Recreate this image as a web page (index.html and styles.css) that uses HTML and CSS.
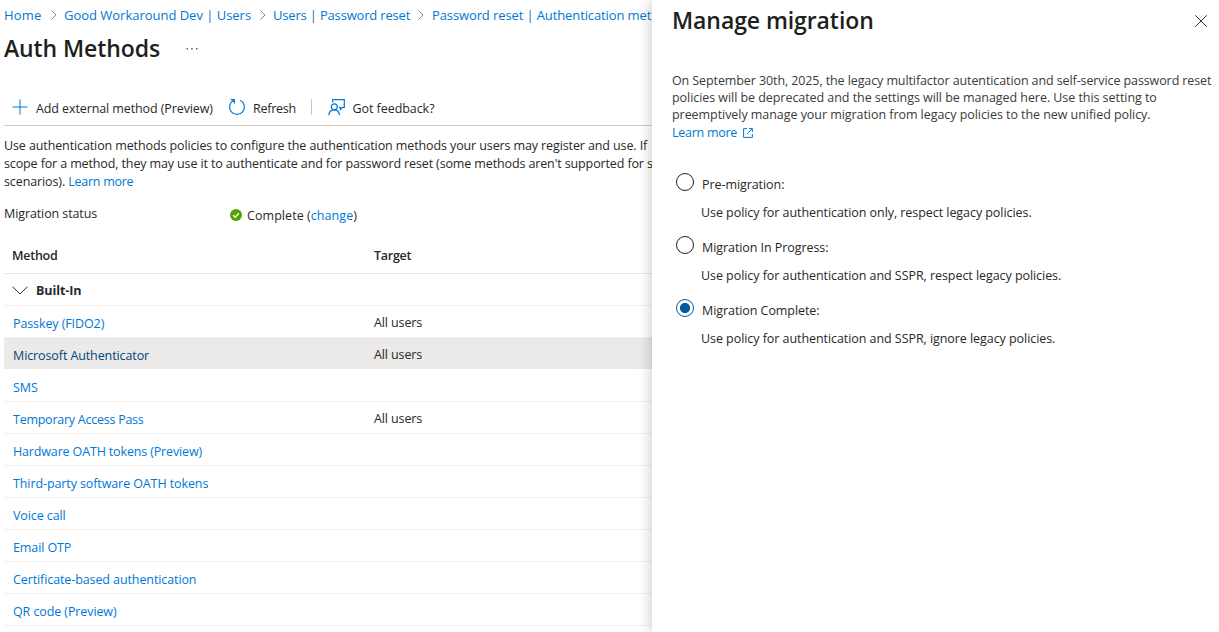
FILE: index.html
```
<!DOCTYPE html>
<html lang="en">
<head>
<meta charset="utf-8">
<title>Auth Methods</title>
<link rel="stylesheet" href="styles.css">
</head>
<body>
<div class="app">
  <main class="blade">
    <nav class="crumbs">
      <a class="c-home">Home</a>
      <svg class="sep" viewBox="0 0 8 12"><path d="M1.5 1.5 6 6 1.5 10.500"/></svg>
      <a class="c-dev">Good Workaround Dev | Users</a>
      <svg class="sep" viewBox="0 0 8 12"><path d="M1.5 1.5 6 6 1.5 10.500"/></svg>
      <a class="c-reset">Users | Password reset</a>
      <svg class="sep" viewBox="0 0 8 12"><path d="M1.5 1.5 6 6 1.5 10.500"/></svg>
      <a class="c-auth">Password reset | Authentication met</a>
    </nav>
    <header class="head">
      <h1 class="title">Auth Methods</h1>
      <svg class="dots" viewBox="0 0 12 4"><path d="M.5 1h1.500v1.500H.5zM5.200 1h1.500v1.500H5.200zM10 1h1.500v1.500H10z"/></svg>
    </header>
    <div class="toolbar">
      <svg class="icon plus" viewBox="0 0 16 16"><path d="M8 .5v15M.5 8h15"/></svg>
      <span class="t-add">Add external method (Preview)</span>
      <svg class="icon refresh" viewBox="0 0 18 18"><path d="M12.200 2.300A7.400 7.400 0 1 1 5.800 2.300M2.500 1.700H6.300V5.500"/></svg>
      <span class="t-refresh">Refresh</span>
      <i class="divider"></i>
      <svg class="icon feedback" viewBox="0 0 17 17"><path d="M4.700 3.500V.7H16.300V8.300H14.500L12.300 10.600V8.300H10.800"/><circle cx="6.300" cy="7.800" r="3"/><path d="M.8 16.200C1 12.800 3.200 10.800 6.200 10.800s5 2 5.300 5.400"/></svg>
      <span class="t-feedback">Got feedback?</span>
    </div>
    <p class="intro">
      <span class="line">Use authentication methods policies to configure the authentication methods your users may register and use. If</span>
      <span class="line second">scope for a method, they may use it to authenticate and for password reset (some methods aren't supported for s</span>
      <span class="line">scenarios). <a class="learn">Learn more</a></span>
    </p>
    <div class="status">
      <span class="status-label">Migration status</span>
      <svg class="ok" viewBox="0 0 12 12"><circle cx="6" cy="6" r="6"/><path d="M3.200 6.200 5.200 8.200 8.900 4.200"/></svg>
      <span class="status-value">Complete (<a>change</a>)</span>
    </div>
    <section class="table">
      <div class="row header"><span>Method</span><span>Target</span></div>
      <div class="row group"><svg class="chev" viewBox="0 0 16 9"><path d="M.5.7 8 8 15.500.7"/></svg><span>Built-In</span></div>
      <div class="row"><a>Passkey (FIDO2)</a><span class="target">All users</span></div>
      <div class="row active"><a>Microsoft Authenticator</a><span class="target">All users</span></div>
      <div class="row"><a>SMS</a></div>
      <div class="row"><a class="tap">Temporary Access Pass</a><span class="target">All users</span></div>
      <div class="row"><a class="oath">Hardware OATH tokens (Preview)</a></div>
      <div class="row"><a>Third-party software OATH tokens</a></div>
      <div class="row"><a>Voice call</a></div>
      <div class="row"><a>Email OTP</a></div>
      <div class="row"><a>Certificate-based authentication</a></div>
      <div class="row"><a>QR code (Preview)</a></div>
    </section>
  </main>
  <aside class="panel">
    <header class="panel-head">
      <h2 class="panel-title">Manage migration</h2>
      <svg class="close" viewBox="0 0 12 12"><path d="M.3.3 11.700 11.700M11.700.3.3 11.700"/></svg>
    </header>
    <div class="note">
      <span class="line">On September 30th, 2025, the legacy multifactor autentication and self-service password reset</span>
      <span class="line wide">policies will be deprecated and the settings will be managed here. Use this setting to</span>
      <span class="line wide">preemptively manage your migration from legacy policies to the new unified policy.</span>
      <a class="more"><span class="learn">Learn more</span><svg class="ext" viewBox="0 0 10 10"><path d="M4 .6H.6V9.400H9.400V6M6 .6H9.400V4M9.200.8 4.200 5.800"/></svg></a>
    </div>
    <div class="options">
      <div class="option"><i class="radio"></i><span class="label">Pre-migration:</span></div>
      <p class="hint">Use policy for authentication only, respect legacy policies.</p>
      <div class="option"><i class="radio"></i><span class="label">Migration In Progress:</span></div>
      <p class="hint">Use policy for authentication and SSPR, respect legacy policies.</p>
      <div class="option"><i class="radio checked"></i><span class="label">Migration Complete:</span></div>
      <p class="hint">Use policy for authentication and SSPR, ignore legacy policies.</p>
    </div>
  </aside>
</div>
</body>
</html>
```
FILE: styles.css
```
* { box-sizing: border-box; }
body {
  margin: 0;
  background: #fff;
  color: #292827;
  font: 12.5px/18px "Open Sans", "Noto Sans", sans-serif;
  letter-spacing: -0.1px;
}
h1, h2, p { margin: 0; }
a { color: #0078d4; }
svg { display: block; flex: none; fill: none; stroke: currentColor; }
.app { display: flex; width: 1219px; height: 632px; overflow: hidden; }
.blade { width: 652px; flex: none; padding-left: 4px; overflow: hidden; white-space: nowrap; }

.crumbs { display: flex; align-items: center; height: 30px; font-size: 13px; }
.crumbs a { flex: none; }
.c-home { width: 38px; letter-spacing: 0.19px; }
.c-dev { width: 188px; letter-spacing: -0.02px; }
.c-reset { width: 137px; letter-spacing: -0.18px; }
.c-auth { letter-spacing: -0.11px; }
.sep { width: 8px; height: 12px; margin: 0 6px 0 8px; color: #8a8886; }
.c-dev + .sep { margin-left: 7px; }
.c-reset + .sep { margin-left: 7px; margin-right: 7px; }

.head { display: flex; align-items: center; height: 36px; padding-bottom: 1px; }
.title, .panel-title { font-size: 23px; line-height: 32px; font-weight: 600; letter-spacing: -0.1px; color: #201f1e; }
.dots { width: 12px; height: 4px; margin: 2px 0 0 26px; fill: #605e5c; stroke: none; }

.toolbar { display: flex; align-items: center; height: 60px; padding: 23px 0 0 8px; border-bottom: 1px solid #cfcdcb; }
.toolbar span { flex: none; padding-top: 3px; }
.icon { color: #0078d4; stroke-width: 1.2; }
.plus { width: 16px; height: 16px; stroke-width: 1; }
.t-add { width: 177px; margin-left: 8px; }
.refresh { width: 18px; height: 18px; margin-left: 15px; }
.t-refresh { width: 43px; margin-left: 7px; letter-spacing: -0.25px; }
.divider { width: 1px; height: 16px; margin-left: 15px; background: #c8c6c4; }
.feedback { width: 17px; height: 17px; margin-left: 16px; }
.t-feedback { margin-left: 7.5px; letter-spacing: -0.06px; }

.intro { padding-top: 11px; }
.line { display: block; white-space: nowrap; }
.intro .line { letter-spacing: -0.11px; }
.intro .second { letter-spacing: -0.125px; }
.line .learn, .learn { letter-spacing: -0.26px; }

.status { display: flex; align-items: center; height: 36px; margin-top: 8px; }
.status-label { width: 226px; margin-bottom: 6px; }
.ok { width: 12px; height: 12px; margin-bottom: 4px; fill: #57a300; stroke: none; }
.ok path { fill: none; stroke: #fff; stroke-width: 1.4; }
.status-value { margin: 0 0 2px 5px; letter-spacing: 0.06px; }

.table { padding-top: 3px; }
.row { display: grid; grid-template-columns: 361px 1fr; align-items: center; height: 32px; padding: 4px 0 0 9px; border-bottom: 1px solid #f0efee; }
.row .target { margin-bottom: 2px; letter-spacing: -0.11px; }
.header { height: 36px; padding: 1px 0 0 8px; grid-template-columns: 362px 1fr; font-weight: 600; letter-spacing: -0.26px; border-color: #e5e4e3; }
.group { grid-template-columns: 24px 1fr; padding: 2px 0 0 8px; font-weight: 700; letter-spacing: -0.07px; }
.chev { width: 16px; height: 9px; margin-bottom: 1px; stroke: #323130; }
.active { background: #ebeae8; background-clip: padding-box; border-color: transparent; }
.active a { color: #00457b; }
.tap { letter-spacing: -0.25px; }
.oath { letter-spacing: -0.15px; }

.panel { position: relative; flex: 1; padding-left: 20px; background: #fff; box-shadow: 0 0 13px rgba(0, 0, 0, .24); }
.panel-head { display: flex; align-items: center; justify-content: space-between; height: 42px; padding-right: 12px; }
.panel-title { margin-bottom: 2px; letter-spacing: -0.08px; }
.close { width: 12px; height: 12px; stroke: #323130; }
.note { padding-top: 30px; line-height: 17px; color: #3b3a39; }
.note .wide { letter-spacing: -0.055px; }
.more { display: flex; align-items: center; height: 18px; padding-top: 1px; }
.ext { width: 10px; height: 10px; margin-left: 6px; }
.options { padding: 31px 0 0 4px; }
.option { display: flex; align-items: flex-start; height: 32px; padding-top: 1px; }
.radio { width: 18px; height: 18px; border: 1px solid #201f1e; border-radius: 50%; }
.radio.checked { border-color: #005ba1; background: radial-gradient(circle, #005ba1 0 4.8px, transparent 5.300px); }
.label { margin: 3px 0 0 8px; letter-spacing: -0.07px; }
.hint { height: 31px; padding-left: 25px; letter-spacing: -0.06px; }
```
